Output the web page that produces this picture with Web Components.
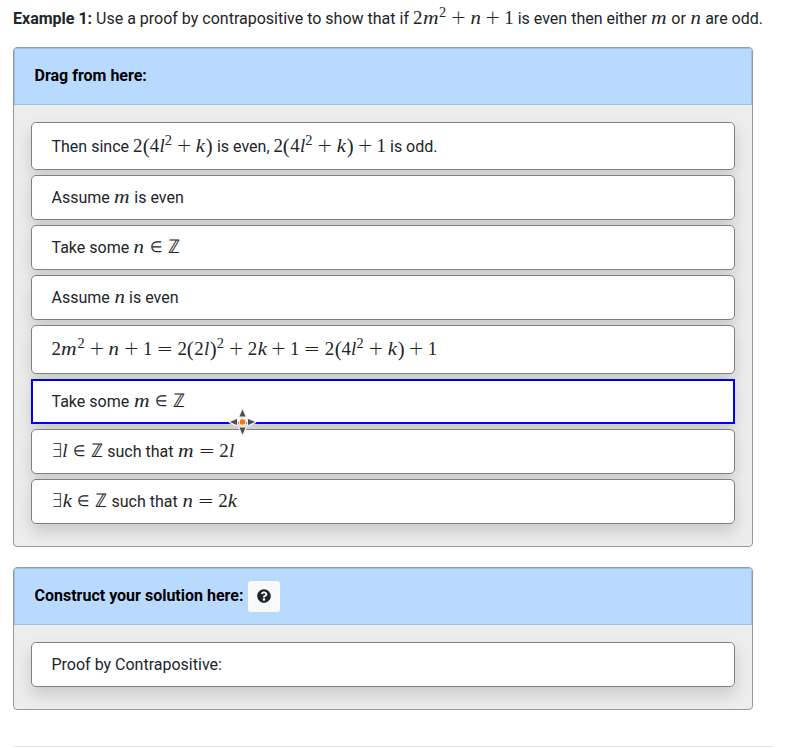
<!DOCTYPE html>
<html lang="en">
<head>
<meta charset="utf-8">
<title>Proof by contrapositive</title>
<style>
body { margin: 0; background: #fff; color: #212529; font: 16px/24px Roboto, sans-serif; }
</style>
</head>
<body>
<proof-page></proof-page>
<script>
// w: advance in em, g: side gap in em, x/y: horizontal and vertical stretch, c: font class
const GLYPHS = {
  '2': { w: .5 }, '1': { w: .5 }, '4': { w: .5 },
  '(': { w: .389, x: 1.1, y: 1.1 }, ')': { w: .389, x: 1.1, y: 1.1 },
  'm': { w: .878, c: 'i', x: 1.14 }, 'n': { w: .6, c: 'i', x: 1.1 },
  'k': { w: .521, c: 'i', x: 1.08 }, 'l': { w: .298, c: 'i' },
  '+': { w: .778, c: 'o', g: .222 }, '=': { w: .778, c: 'o', g: .278, x: 1.05 },
  '∈': { w: .667, c: 'o', g: .278, x: .76, y: .8 }, '∃': { w: .556, c: 'o', x: .95 }, 'ℤ': { w: .667, c: 'o' }
};
customElements.define('math-expr', class extends HTMLElement {
  constructor() {
    super();
    const root = this.attachShadow({ mode: 'open' });
    let html = '';
    const src = this.getAttribute('src');
    for (let i = 0; i < src.length; i++) {
      let ch = src[i], sup = '';
      if (ch === '^') { ch = src[++i]; sup = ' sup'; }
      const d = GLYPHS[ch];
      html += `<span class="g ${d.c || ''}${sup}" style="width:${d.w}em;margin-inline:${d.g || 0}em"><span style="transform:scale(${d.x || 1},${d.y || 1})">${ch}</span></span>`;
    }
    root.innerHTML = `<style>
      :host { display: inline-block; white-space: nowrap; font: 18.9px/24px "Liberation Serif", serif; }
      .g { display: inline-flex; justify-content: center; white-space: pre; }
      .g > span { display: block; }
      .i { font-style: italic; }
      .o { font-family: "DejaVu Sans", sans-serif; font-weight: 200; line-height: 20px; }
      .sup { font-size: .76em; line-height: 1; position: relative; top: -.46em; margin-right: .05em !important; }
    </style>${html}`;
  }
});
customElements.define('proof-item', class extends HTMLElement {
  constructor() {
    super();
    this.attachShadow({ mode: 'open' }).innerHTML = `<style>
      :host { display: flex; position: relative; align-items: center; box-sizing: border-box; height: 45px; padding: 0 19.5px 1px;
        background: #fff; border: 1px solid #808080; border-radius: 5px; box-shadow: 0 8px 16px rgba(0,0,0,.15); }
      :host([tall]) { height: 48px; padding-bottom: 0; }
      :host([taller]) { height: 49px; padding-bottom: 2px; }
      :host([plain]) { padding-bottom: 0; }
      :host([active]) { border: 2px solid #0000f0; border-radius: 0; padding: 0 18.5px 1px; }
      div { white-space: nowrap; height: 24px; }
    </style><div><slot></slot></div>`;
  }
});
customElements.define('proof-panel', class extends HTMLElement {
  constructor() {
    super();
    this.attachShadow({ mode: 'open' }).innerHTML = `<style>
      :host { display: flex; flex-direction: column; box-sizing: border-box; width: 740px;
        background: #ededed; border: 1px solid #999; border-radius: 4px; overflow: hidden; }
      header { display: flex; align-items: center; gap: 4.5px; box-sizing: border-box; height: 57px; padding: 0 19.5px;
        background: #b8daff; border: 1px solid #9fbfdf; color: #000; font-weight: 700; }
      ::slotted(span) { padding-bottom: 2px; }
      section { display: grid; gap: 5px; padding: 17px 17px 22px; }
    </style><header><slot name="title"></slot></header><section><slot></slot></section>`;
  }
});
customElements.define('help-button', class extends HTMLElement {
  constructor() {
    super();
    this.attachShadow({ mode: 'open' }).innerHTML = `<style>
      :host { display: grid; place-items: center; width: 32px; height: 31px; background: #f8f9fa; border-radius: 3px; }
      svg { display: block; width: 14px; height: 14px; margin-bottom: 1px; }
    </style><svg viewBox="0 0 512 512"><path fill="#212529" d="M504 256c0 137-111 248-248 248S8 393 8 256 119 8 256 8s248 111 248 248zM262.700 90c-54.500 0-89.300 23-116.500 63.800-3.500 5.300-2.400 12.400 2.700 16.300l34.700 26.300c5.200 3.900 12.600 3 16.700-2.100 17.900-22.700 30.100-35.800 57.300-35.800 20.400 0 45.700 13.100 45.700 33 0 15-12.400 22.700-32.500 34C247.100 238.500 216 255 216 296v4c0 6.600 5.400 12 12 12h56c6.600 0 12-5.400 12-12v-1.300c0-28.500 83.200-29.600 83.200-106.700 0-58-60.200-102-116.500-102zM256 338c-25.400 0-46 20.600-46 46s20.600 46 46 46 46-20.600 46-46-20.600-46-46-46z"/></svg>`;
  }
});
customElements.define('move-cursor', class extends HTMLElement {
  constructor() {
    super();
    this.attachShadow({ mode: 'open' }).innerHTML = `<style>
      :host { position: absolute; left: 196px; top: 28px; width: 26px; height: 26px; z-index: 2; }
      svg { display: block; overflow: visible; }
    </style><svg width="26" height="26" viewBox="0 0 26 26"><g fill="#4d4d4d" stroke="#f0f0f0" stroke-width="2.500" paint-order="stroke" stroke-linejoin="round"><path d="M13.500 .5l3 7h-6zM13.500 25.500l3-7h-6zM1 13l7-3v6zM26 13l-7-3v6z"/><circle cx="13.500" cy="13" r="2.800" fill="#f57900"/></g></svg>`;
  }
});
customElements.define('proof-page', class extends HTMLElement {
  constructor() {
    super();
    this.attachShadow({ mode: 'open' }).innerHTML = `<style>
      :host { display: flex; flex-direction: column; box-sizing: border-box; padding: 6px 13px 0; height: 748px; overflow: hidden; }
      p { margin: 0; height: 24px; white-space: nowrap; }
      .a { margin-top: 17px; height: 500px; }
      .b { margin-top: 20px; height: 143px; }
      hr { width: 760px; margin: 36px 0 0; border: 0; border-top: 1px solid #e5e5e5; }
    </style>
    <p><b>Example 1:</b> Use a proof by contrapositive to show that if <math-expr src="2m^2+n+1"></math-expr> is even then either <math-expr src="m"></math-expr> or <math-expr src="n"></math-expr> are odd.</p>
    <proof-panel class="a"><span slot="title">Drag from here:</span>
      <proof-item tall>Then since <math-expr src="2(4l^2+k)"></math-expr> is even, <math-expr src="2(4l^2+k)+1"></math-expr> is odd.</proof-item>
      <proof-item>Assume <math-expr src="m"></math-expr> is even</proof-item>
      <proof-item>Take some <math-expr src="n∈ℤ"></math-expr></proof-item>
      <proof-item>Assume <math-expr src="n"></math-expr> is even</proof-item>
      <proof-item taller><math-expr src="2m^2+n+1=2(2l)^2+2k+1=2(4l^2+k)+1"></math-expr></proof-item>
      <proof-item active>Take some <math-expr src="m∈ℤ"></math-expr><move-cursor></move-cursor></proof-item>
      <proof-item><math-expr src="∃l∈ℤ"></math-expr> such that <math-expr src="m=2l"></math-expr></proof-item>
      <proof-item><math-expr src="∃k∈ℤ"></math-expr> such that <math-expr src="n=2k"></math-expr></proof-item>
    </proof-panel>
    <proof-panel class="b"><span slot="title">Construct your solution here:</span><help-button slot="title"></help-button>
      <proof-item plain>Proof by Contrapositive:</proof-item>
    </proof-panel>
    <hr>`;
  }
});
</script>
</body>
</html>
